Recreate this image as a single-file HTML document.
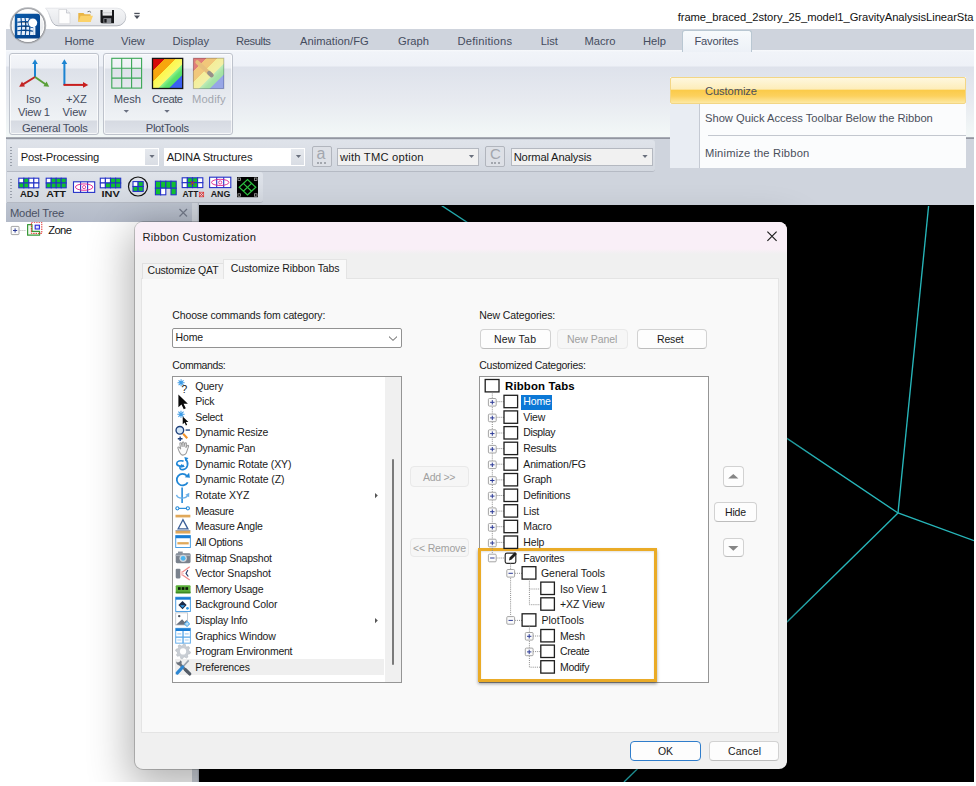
<!DOCTYPE html>
<html><head><meta charset="utf-8"><title>Ribbon Customization</title>
<style>
*{margin:0;padding:0;box-sizing:border-box}
html,body{width:976px;height:786px;overflow:hidden;background:#fff}
body{position:relative;font-family:"Liberation Sans",sans-serif}
.a{position:absolute}
.t{position:absolute;white-space:nowrap;line-height:16px;height:16px}
.btn{position:absolute;background:#fdfdfd;border:1px solid #d2d2d2;border-bottom-color:#bdbdbd;border-radius:4px}
.btn.dis{background:#f6f6f6;border-color:#e9e9e9}
.cb{position:absolute;width:13.5px;height:13.5px;border:1.3px solid #222;background:#fff}
.grp{position:absolute;border:1px solid #bec3cc;border-radius:3px;box-shadow:inset 0 0 0 1px rgba(255,255,255,.7);background:linear-gradient(#f4f6fa 0,#eef0f5 14px,#dde1e9 15px,#eff2f5 66px,#d6dae2 67px,#dfe3ea 100%)}
.combo{position:absolute;background:#fff;height:18px}
.cbtn{position:absolute;width:13.2px;height:16px;background:linear-gradient(#e6e9ee,#d9dde4)}
</style></head><body>
<div class="a" style="left:0;top:0;width:974px;height:782px;overflow:hidden">

<!-- ===== application frame ===== -->
<div class="a" style="left:6px;top:29px;width:968px;height:22px;background:#cfd4dd"></div>
<div class="a" style="left:6px;top:50px;width:968px;height:88px;background:linear-gradient(#f8fafc 0,#f1f4f9 2px,#eef1f7 16px,#dee2eb 17px,#e7eaf0 50px,#f2f7f7 84px,#f2f7f7 100%)"></div>
<div class="a" style="left:6px;top:137.2px;width:968px;height:2.1px;background:linear-gradient(#b3b7bf,#878c96)"></div>
<div class="a" style="left:6px;top:139px;width:968px;height:66px;background:#cfd4dd"></div>
<!-- active ribbon tab -->
<div class="a" style="left:682px;top:30px;width:70px;height:22px;border:1px solid #b9c7d2;border-bottom:none;border-radius:3px 3px 0 0;background:linear-gradient(#f7fafc,#edf1f7)"></div>
<!-- ribbon groups -->
<div class="grp" style="left:9.3px;top:53px;width:89.6px;height:82.3px"></div>
<div class="grp" style="left:102.6px;top:53px;width:130px;height:82.3px"></div>
<!-- toolbar bands -->
<div class="a" style="left:7px;top:139.5px;width:648px;height:32px;background:linear-gradient(#dfe3ea,#d3d8e0);border-bottom:1px solid #b5bac4;border-radius:0 3px 3px 0"></div>
<div class="a" style="left:7px;top:172px;width:256px;height:30.6px;background:linear-gradient(#dfe3ea,#d3d8e0);border-bottom:1px solid #b5bac4;border-radius:0 3px 3px 0"></div>
<div class="a" style="left:10px;top:147px;width:2px;height:19px;background:repeating-linear-gradient(#9aa0ab 0 1px,transparent 1px 3px)"></div>
<div class="a" style="left:10px;top:179px;width:2px;height:19px;background:repeating-linear-gradient(#9aa0ab 0 1px,transparent 1px 3px)"></div>
<!-- combos -->
<div class="combo" style="left:17.5px;top:147.5px;width:141.3px"></div><div class="cbtn" style="left:144.8px;top:148.5px"></div>
<div class="combo" style="left:163.7px;top:147.5px;width:141.5px"></div><div class="cbtn" style="left:291.2px;top:148.5px"></div>
<div class="a" style="left:311.5px;top:145.5px;width:20.5px;height:21px;border:1px solid #b1b5bd;border-radius:2px;background:#dde0e6"></div>
<div class="combo" style="left:337px;top:147.5px;width:142px;background:#f1f1f1;border:1px solid #b4b8c0"></div>
<div class="a" style="left:484.5px;top:145.5px;width:20.5px;height:21px;border:1px solid #b1b5bd;border-radius:2px;background:#dde0e6"></div>
<div class="combo" style="left:510.5px;top:147.5px;width:142px;background:#f1f1f1;border:1px solid #b4b8c0"></div>
<!-- model tree -->
<div class="a" style="left:6px;top:203.4px;width:186.4px;height:18.6px;background:linear-gradient(#bcc3cf,#b3bac8)"></div>
<div class="a" style="left:6px;top:222px;width:187px;height:560px;background:#fff"></div>
<div class="a" style="left:192.4px;top:203.4px;width:6.2px;height:578.6px;background:linear-gradient(90deg,#cfd4dc 0,#cfd4dc 75%,#a4aab6 100%)"></div>
<!-- viewport -->
<div class="a" style="left:198.6px;top:204.8px;width:775.4px;height:577.2px;background:#000"></div>
<svg class="a" style="left:198px;top:206px" width="776" height="576" viewBox="198 206 776 576">
 <g stroke="#27b6ba" stroke-width="1.35" fill="none">
  <path d="M440 204.5 L520 257"/>
  <path d="M928.7 205 L898 513"/>
  <path d="M700 380 L898 513 L974 540.6"/>
  <path d="M898 513 L624 782"/>
 </g>
</svg>
<!-- popup menu -->
<div class="a" style="left:670.4px;top:77px;width:295.4px;height:90.8px;background:#fbfcfd"></div>
<div class="a" style="left:670.4px;top:104px;width:29.6px;height:63.8px;background:#e9edf3;border-right:1px solid #c5cad3"></div>
<div class="a" style="left:708px;top:135px;width:258px;height:1px;background:#c3c7cf"></div>
<div class="a" style="left:670.4px;top:77px;width:295.4px;height:26.8px;border:1px solid #f3d685;border-radius:2px;background:linear-gradient(#fef7de 0,#fdedba 44%,#fbcb4a 50%,#fcd15e 72%,#fde9a4 100%)"></div>
<!-- ===== dialog ===== -->
<div class="a" style="left:135px;top:222.3px;width:651.6px;height:546.6px;border-radius:8px;background:#f0f0f0;box-shadow:0 0 0 1px rgba(0,0,0,.2),0 12px 42px 6px rgba(0,0,0,.30)"></div>
<div class="a" style="left:135px;top:222.3px;width:651.6px;height:31.7px;border-radius:8px 8px 0 0;background:linear-gradient(#f9eff7 0,#f9eff7 84%,#f0f0f0 100%)"></div>
<div class="a" style="left:140.6px;top:278.4px;width:638.4px;height:454.8px;background:#f9f9f9;border:1px solid #e4e4e4"></div>
<div class="a" style="left:142px;top:262.5px;width:81.5px;height:16px;background:#f3f3f3;border:1px solid #e0e0e0;border-bottom:none"></div>
<div class="a" style="left:223px;top:259px;width:123.5px;height:20.4px;background:#f9f9f9;border:1px solid #e4e4e4;border-bottom:none"></div>
<!-- left column -->
<div class="a" style="left:172.3px;top:328px;width:229.7px;height:20px;background:#fff;border:1px solid #929292;border-radius:2px"></div>
<div class="a" style="left:172.3px;top:376.1px;width:229.7px;height:306.9px;background:#fff;border:1px solid #959595"></div>
<div class="a" style="left:384.6px;top:377.1px;width:16.4px;height:304.9px;background:#f0f0f0"></div>
<div class="a" style="left:392px;top:459px;width:1.6px;height:206px;background:#7a7a7a;border-radius:1px"></div>
<div class="a" style="left:174.6px;top:659px;width:209px;height:15.6px;background:#efefef"></div>
<!-- right column -->
<div class="btn" style="left:480.3px;top:329px;width:70.3px;height:19.7px"></div>
<div class="btn dis" style="left:557.4px;top:329px;width:70.6px;height:19.7px"></div>
<div class="btn" style="left:636.5px;top:329px;width:70.3px;height:19.7px"></div>
<div class="a" style="left:479.3px;top:376.1px;width:229.7px;height:306.9px;background:#fff;border:1px solid #959595"></div>
<div class="btn dis" style="left:410px;top:466.4px;width:58.7px;height:20.3px"></div>
<div class="btn dis" style="left:410px;top:537.5px;width:58.7px;height:19.8px"></div>
<div class="btn" style="left:723px;top:466.4px;width:20.7px;height:20.2px"></div>
<div class="btn" style="left:714.3px;top:501.6px;width:43.2px;height:20.2px"></div>
<div class="btn" style="left:723px;top:537.6px;width:20.7px;height:19.6px"></div>
<div class="btn" style="left:630px;top:741.3px;width:71px;height:19.8px;border:1.3px solid #2f7dcb"></div>
<div class="btn" style="left:709.2px;top:741.3px;width:70.2px;height:19.8px"></div>
<!-- selected item -->
<div class="a" style="left:521px;top:394.5px;width:31px;height:15px;background:#0b78d6"></div>
<!-- orange highlight -->
<div class="a" style="left:477.6px;top:548px;width:179px;height:134.4px;border:3px solid #eaab27;box-shadow:0 2px 3px rgba(0,0,0,.35), inset 0 1px 2px rgba(0,0,0,.12)"></div>

<svg class="a" style="left:0;top:0" width="976" height="224" viewBox="0 0 976 224">
<defs>
 <linearGradient id="orbg" x1="0" y1="0" x2="0" y2="1"><stop offset="0" stop-color="#ffffff"/><stop offset=".55" stop-color="#e9ebee"/><stop offset="1" stop-color="#ffffff"/></linearGradient>
 <linearGradient id="blu" x1="0" y1="0" x2="1" y2="1"><stop offset="0" stop-color="#0a5cab"/><stop offset="1" stop-color="#033d86"/></linearGradient>
 <linearGradient id="qats" x1="0" y1="0" x2="0" y2="1"><stop offset="0" stop-color="#e4e6ea"/><stop offset="1" stop-color="#aeb2ba"/></linearGradient>
 <linearGradient id="qatg" x1="0" y1="0" x2="0" y2="1"><stop offset="0" stop-color="#f4f5f7"/><stop offset="1" stop-color="#e4e6ea"/></linearGradient>
 <linearGradient id="rain" x1="0" y1="0" x2="1" y2="1">
  <stop offset="0" stop-color="#d60a0a"/><stop offset=".21" stop-color="#d60a0a"/>
  <stop offset=".21" stop-color="#f7a60e"/><stop offset=".39" stop-color="#f7a60e"/>
  <stop offset=".39" stop-color="#fdf74e"/><stop offset=".58" stop-color="#fafa6a"/>
  <stop offset=".6" stop-color="#8cf08a"/><stop offset=".68" stop-color="#5ce26c"/>
  <stop offset=".76" stop-color="#52dc66"/>
  <stop offset=".78" stop-color="#3a60f0"/><stop offset="1" stop-color="#3a60f0"/>
 </linearGradient>
</defs>
<!-- QAT pill -->
<path d="M45.5 8.2 H117 A8.8 8.8 0 0 1 117 25.8 H58 C50 25.8 50.5 12 45.5 8.2 Z" fill="url(#qatg)" stroke="url(#qats)" stroke-width="1"/>
<!-- new doc -->
<path d="M58.8 9.5 H66.5 L70 13 V23.8 H58.8 Z" fill="#fdfdfd" stroke="#d5d7db" stroke-width=".8"/>
<path d="M66.5 9.5 V13 H70" fill="#eef0f3" stroke="#b9bcc3" stroke-width=".7"/>
<!-- folder -->
<path d="M78.3 13 H83.5 L84.6 14.2 H90.6 V21.8 H78.3 Z" fill="#e9b544"/>
<path d="M80.6 15.7 H93 L90.6 21.9 H78.3 Z" fill="#fbd26a"/>
<path d="M87.5 11.8 q2.2 -1.4 3.6 .7" stroke="#555" stroke-width=".8" fill="none"/>
<!-- floppy -->
<path d="M100.5 10 H114 V23.3 H101.6 L100.5 22.2 Z" fill="#17181b"/>
<rect x="102.6" y="10" width="9.4" height="5.6" fill="#e9eaec"/>
<rect x="102.6" y="12.3" width="9.4" height="1" fill="#c9cacd"/>
<rect x="103.4" y="18.2" width="7.8" height="5.1" fill="#8d9096"/>
<rect x="104.3" y="19" width="2.3" height="3.6" fill="#17181b"/>
<!-- qat dropdown -->
<rect x="134.3" y="12.8" width="5.4" height="1.3" fill="#4a4f5a"/>
<path d="M134 15.6 H140 L137 19 Z" fill="#4a4f5a"/>
<!-- orb -->
<circle cx="28" cy="25.6" r="17.5" fill="none" stroke="#b4b6ba" stroke-width="1.5"/><circle cx="28" cy="25.6" r="16.6" fill="url(#orbg)" stroke="#85878d" stroke-width="1.1"/>
<circle cx="28" cy="25.6" r="15.9" fill="none" stroke="#ffffff" stroke-width="1.2" opacity=".9"/>
<rect x="14.8" y="13.8" width="25.2" height="24.8" rx="2.2" fill="url(#blu)"/>
<g stroke="#0a4f9d" stroke-width="1.1">
 <rect x="17.3" y="18" width="16" height="17" fill="#e8f0fb" stroke="none"/>
 <path d="M21 18 q1.5 8 0 17 M25 18 q1.8 8 .3 17 M29.2 18 q1.5 8 .3 17"/>
 <path d="M17.3 22.3 q8 -1.6 16 .2 M17.3 26.6 q8 -1.6 16 .4 M17.3 30.8 q8 -1.6 16 .4"/>
</g>
<circle cx="32.8" cy="22.8" r="5.2" fill="#0a4f9d"/>
<circle cx="32.8" cy="22.8" r="4.4" fill="#ffffff"/>
<rect x="33.2" y="27" width="2.2" height="8" fill="#e8f0fb"/>

<!-- Iso View icon -->
<g stroke-width="2" fill="none" stroke-linecap="butt">
 <path d="M35 77 V62" stroke="#1b83d1"/><path d="M35 59.2 L32.2 64 H37.8 Z" fill="#1b83d1" stroke="none"/>
 <path d="M35 77 L23 84.3" stroke="#c32525"/><path d="M19.2 86.8 L22 81.6 L25 86.4 Z" fill="#c32525" stroke="none"/>
 <path d="M35 77 L45.5 84.3" stroke="#5a9f38"/><path d="M49.2 86.8 L43.4 86.3 L46.6 81.6 Z" fill="#5a9f38" stroke="none"/>
</g>
<!-- +XZ icon -->
<path d="M64.4 85 V62" stroke="#1b83d1" stroke-width="2"/><path d="M64.4 59.2 L61.6 64 H67.2 Z" fill="#1b83d1"/>
<path d="M63.5 84.9 H84" stroke="#c81e1e" stroke-width="2"/><path d="M88.3 84.9 L83 82 V87.8 Z" fill="#c81e1e"/>
<!-- Mesh icon -->
<g stroke="#3aa655" stroke-width="1.1" fill="none">
 <rect x="111.8" y="58.3" width="29.8" height="29.8" fill="none"/>
 <path d="M121.7 58.3 V88.1 M131.6 58.3 V88.1 M111.8 68.2 H141.6 M111.8 78.1 H141.6"/>
</g>
<!-- Create icon -->
<rect x="152.5" y="58.4" width="30.2" height="30.1" fill="url(#rain)" stroke="#141414" stroke-width="1.3"/>
<!-- Modify icon (disabled) -->
<rect x="193.4" y="58.2" width="30.4" height="30.4" fill="url(#rain)"/>
<rect x="193.4" y="58.2" width="30.4" height="30.4" fill="#ece6de" opacity=".52" stroke="#7d7d86" stroke-width="1"/>
<path d="M197.3 62.2 L211.5 75.2" stroke="#e6bf7c" stroke-width="4" stroke-linecap="round"/>
<path d="M209.2 73 L211.6 75.3" stroke="#97908a" stroke-width="4.2" stroke-linecap="round"/>
<!-- split arrows -->
<path d="M123.6 110 H129 L126.3 112.8 Z" fill="#6a7080"/>
<path d="M164.3 110 H169.7 L167 112.8 Z" fill="#6a7080"/>
<!-- combo arrows -->
<path d="M149.4 155 H154.6 L152 158 Z" fill="#6a707d"/>
<path d="M295.9 155 H301.1 L298.5 158 Z" fill="#6a707d"/>
<path d="M468.9 155 H474.1 L471.5 158 Z" fill="#6a707d"/>
<path d="M642.4 155 H647.6 L645 158 Z" fill="#6a707d"/>
<!-- model tree close -->
<path d="M179.5 209 L187 216.5 M187 209 L179.5 216.5" stroke="#6b7180" stroke-width="1.2"/>
</svg>
<svg class="a" style="left:0;top:172px" width="270" height="32" viewBox="0 172 270 32"><rect x="18.8" y="178.2" width="5.0" height="4.8" fill="#ffffff" stroke="#2432c8" stroke-width="1.1"/><rect x="23.8" y="178.2" width="5.0" height="4.8" fill="#10c030" stroke="#2432c8" stroke-width="1.1"/><rect x="28.8" y="178.2" width="5.0" height="4.8" fill="#ffffff" stroke="#2432c8" stroke-width="1.1"/><rect x="33.8" y="178.2" width="5.0" height="4.8" fill="#ffffff" stroke="#2432c8" stroke-width="1.1"/><rect x="18.8" y="183.0" width="5.0" height="4.8" fill="#10c030" stroke="#2432c8" stroke-width="1.1"/><rect x="23.8" y="183.0" width="5.0" height="4.8" fill="#10c030" stroke="#2432c8" stroke-width="1.1"/><rect x="28.8" y="183.0" width="5.0" height="4.8" fill="#ffffff" stroke="#2432c8" stroke-width="1.1"/><rect x="33.8" y="183.0" width="5.0" height="4.8" fill="#ffffff" stroke="#2432c8" stroke-width="1.1"/><text x="20" y="197" font-family="Liberation Sans, sans-serif" font-weight="bold" font-size="8.6" textLength="19" lengthAdjust="spacingAndGlyphs" fill="#1a1a1a">ADJ</text><rect x="46.2" y="178.2" width="5.0" height="4.8" fill="#ffffff" stroke="#2432c8" stroke-width="1.1"/><rect x="51.2" y="178.2" width="5.0" height="4.8" fill="#10c030" stroke="#2432c8" stroke-width="1.1"/><rect x="56.2" y="178.2" width="5.0" height="4.8" fill="#10c030" stroke="#2432c8" stroke-width="1.1"/><rect x="61.2" y="178.2" width="5.0" height="4.8" fill="#10c030" stroke="#2432c8" stroke-width="1.1"/><rect x="46.2" y="183.0" width="5.0" height="4.8" fill="#10c030" stroke="#2432c8" stroke-width="1.1"/><rect x="51.2" y="183.0" width="5.0" height="4.8" fill="#10c030" stroke="#2432c8" stroke-width="1.1"/><rect x="56.2" y="183.0" width="5.0" height="4.8" fill="#10c030" stroke="#2432c8" stroke-width="1.1"/><rect x="61.2" y="183.0" width="5.0" height="4.8" fill="#10c030" stroke="#2432c8" stroke-width="1.1"/><text x="46.3" y="197" font-family="Liberation Sans, sans-serif" font-weight="bold" font-size="8.6" textLength="19.8" lengthAdjust="spacingAndGlyphs" fill="#1a1a1a">ATT</text><rect x="73.5" y="181.8" width="21.2" height="10.6" fill="#fff" stroke="#2432c8" stroke-width="1.1"/><path d="M80.6 181.8 V192.4 M87.6 181.8 V192.4" stroke="#2432c8" stroke-width="1.1"/><ellipse cx="84.1" cy="187.10000000000002" rx="8.7" ry="3.2" fill="none" stroke="#e0208c" stroke-width=".9"/><circle cx="84.1" cy="187.10000000000002" r="1.6" fill="none" stroke="#e0208c" stroke-width=".8"/><rect x="100.3" y="178.2" width="5.1" height="4.8" fill="#ffffff" stroke="#2432c8" stroke-width="1.1"/><rect x="105.4" y="178.2" width="5.1" height="4.8" fill="#ffffff" stroke="#2432c8" stroke-width="1.1"/><rect x="110.5" y="178.2" width="5.1" height="4.8" fill="#10c030" stroke="#2432c8" stroke-width="1.1"/><rect x="115.6" y="178.2" width="5.1" height="4.8" fill="#10c030" stroke="#2432c8" stroke-width="1.1"/><rect x="100.3" y="183.0" width="5.1" height="4.8" fill="#ffffff" stroke="#2432c8" stroke-width="1.1"/><rect x="105.4" y="183.0" width="5.1" height="4.8" fill="#10c030" stroke="#2432c8" stroke-width="1.1"/><rect x="110.5" y="183.0" width="5.1" height="4.8" fill="#10c030" stroke="#2432c8" stroke-width="1.1"/><rect x="115.6" y="183.0" width="5.1" height="4.8" fill="#10c030" stroke="#2432c8" stroke-width="1.1"/><text x="101.5" y="197" font-family="Liberation Sans, sans-serif" font-weight="bold" font-size="8.6" textLength="18.3" lengthAdjust="spacingAndGlyphs" fill="#1a1a1a">INV</text><circle cx="138" cy="186.5" r="9.5" fill="none" stroke="#151515" stroke-width="1.2"/><rect x="133.0" y="181.6" width="5.1" height="4.9" fill="#ffffff" stroke="#2432c8" stroke-width="1.1"/><rect x="138.1" y="181.6" width="5.1" height="4.9" fill="#10c030" stroke="#2432c8" stroke-width="1.1"/><rect x="133.0" y="186.5" width="5.1" height="4.9" fill="#10c030" stroke="#2432c8" stroke-width="1.1"/><rect x="138.1" y="186.5" width="5.1" height="4.9" fill="#10c030" stroke="#2432c8" stroke-width="1.1"/><rect x="155.4" y="181.2" width="5.2" height="7.0" fill="#10c030" stroke="#2432c8" stroke-width="1.1"/><rect x="160.6" y="181.2" width="5.2" height="7.0" fill="#10c030" stroke="#2432c8" stroke-width="1.1"/><rect x="165.8" y="181.2" width="5.2" height="7.0" fill="#10c030" stroke="#2432c8" stroke-width="1.1"/><rect x="171.0" y="181.2" width="5.2" height="7.0" fill="#10c030" stroke="#2432c8" stroke-width="1.1"/><rect x="155.4" y="188.2" width="5.2" height="6.6" fill="#10c030" stroke="#2432c8" stroke-width="1.1"/><rect x="160.6" y="188.2" width="5.2" height="6.6" fill="#ffffff" stroke="#2432c8" stroke-width="1.1"/><rect x="171.0" y="188.2" width="5.2" height="6.6" fill="#10c030" stroke="#2432c8" stroke-width="1.1"/><rect x="182.2" y="177.8" width="5.2" height="4.9" fill="#ffffff" stroke="#2432c8" stroke-width="1.1"/><rect x="187.3" y="177.8" width="5.2" height="4.9" fill="#10c030" stroke="#2432c8" stroke-width="1.1"/><rect x="192.5" y="177.8" width="5.2" height="4.9" fill="#10c030" stroke="#2432c8" stroke-width="1.1"/><rect x="197.6" y="177.8" width="5.2" height="4.9" fill="#ffffff" stroke="#2432c8" stroke-width="1.1"/><rect x="182.2" y="182.7" width="5.2" height="4.9" fill="#ffffff" stroke="#2432c8" stroke-width="1.1"/><rect x="187.3" y="182.7" width="5.2" height="4.9" fill="#10c030" stroke="#2432c8" stroke-width="1.1"/><rect x="192.5" y="182.7" width="5.2" height="4.9" fill="#10c030" stroke="#2432c8" stroke-width="1.1"/><rect x="197.6" y="182.7" width="5.2" height="4.9" fill="#ffffff" stroke="#2432c8" stroke-width="1.1"/><path d="M190.5 181 l4 4 m0 -4 l-4 4" stroke="#e02020" stroke-width="1"/><text x="182.6" y="197" font-family="Liberation Sans, sans-serif" font-weight="bold" font-size="8.6" textLength="15.8" lengthAdjust="spacingAndGlyphs" fill="#1a1a1a">ATT</text><rect x="199.3" y="192.2" width="4.4" height="4.6" fill="none" stroke="#e02020" stroke-width=".7"/><path d="M199.6 192.5 l3.8 4 m0 -4 l-3.8 4" stroke="#e02020" stroke-width=".8"/><rect x="209.6" y="177.2" width="21.2" height="10.4" fill="#fff" stroke="#2432c8" stroke-width="1.1"/><path d="M216.7 177.2 V187.6 M223.7 177.2 V187.6" stroke="#2432c8" stroke-width="1.1"/><ellipse cx="220.2" cy="182.39999999999998" rx="8.7" ry="3.1" fill="none" stroke="#e0208c" stroke-width=".9"/><circle cx="220.2" cy="182.39999999999998" r="1.6" fill="none" stroke="#e0208c" stroke-width=".8"/><text x="210.7" y="197" font-family="Liberation Sans, sans-serif" font-weight="bold" font-size="8.6" textLength="19.6" lengthAdjust="spacingAndGlyphs" fill="#1a1a1a">ANG</text><rect x="237" y="177" width="21" height="20.2" fill="#000"/><g stroke="#2cc040" stroke-width="1.2" fill="none"><path d="M247.5 179.5 L255.8 187.3 L247.5 195 L239.2 187.3 Z M243.3 183.4 L251.6 191.2 M251.6 183.4 L243.3 191.2"/></g><g fill="none" stroke="#b8b8b8" stroke-width=".7"><rect x="238" y="178" width="2.4" height="2.4"/><rect x="254.6" y="178" width="2.4" height="2.4"/><rect x="238" y="193.8" width="2.4" height="2.4"/><rect x="254.6" y="193.8" width="2.4" height="2.4"/></g></svg><span class="t" style="left:316.6px;top:146px;font-size:16px;color:#a3a7ae;line-height:16px">a</span><span class="t" style="left:490px;top:146px;font-size:15px;color:#a3a7ae;line-height:16px">C</span><div class="a" style="left:317px;top:162.2px;width:9px;height:1.5px;background:repeating-linear-gradient(90deg,#a3a7ae 0 2px,transparent 2px 3.5px)"></div><div class="a" style="left:490.5px;top:162.2px;width:9px;height:1.5px;background:repeating-linear-gradient(90deg,#a3a7ae 0 2px,transparent 2px 3.5px)"></div><svg class="a" style="left:476px;top:374px" width="240" height="312" viewBox="476 374 240 312"><rect x="485.2" y="379.5" width="13.8" height="12.4" fill="#fff" stroke="#1e1e1e" stroke-width="1.3"/><path d="M492.3 392.5 V554.0" stroke="#8a8a8a" stroke-width="1" stroke-dasharray="1 1.1" fill="none"/><path d="M496.5 401.7 H504" stroke="#8a8a8a" stroke-width="1" stroke-dasharray="1 1.1" fill="none"/><rect x="488.4" y="398.5" width="7.8" height="7.6" rx="1" fill="#fbfbfb" stroke="#9b9b9b" stroke-width=".9"/><path d="M490.1 402.3 H494.5" stroke="#2c3a96" stroke-width="1"/><path d="M492.3 400.1 V404.5" stroke="#2c3a96" stroke-width="1"/><rect x="504.0" y="395.3" width="13.6" height="12.4" fill="#fff" stroke="#1e1e1e" stroke-width="1.3"/><path d="M496.5 417.3 H504" stroke="#8a8a8a" stroke-width="1" stroke-dasharray="1 1.1" fill="none"/><rect x="488.4" y="414.1" width="7.8" height="7.6" rx="1" fill="#fbfbfb" stroke="#9b9b9b" stroke-width=".9"/><path d="M490.1 417.9 H494.5" stroke="#2c3a96" stroke-width="1"/><path d="M492.3 415.7 V420.1" stroke="#2c3a96" stroke-width="1"/><rect x="504.0" y="410.9" width="13.6" height="12.4" fill="#fff" stroke="#1e1e1e" stroke-width="1.3"/><path d="M496.5 433.0 H504" stroke="#8a8a8a" stroke-width="1" stroke-dasharray="1 1.1" fill="none"/><rect x="488.4" y="429.8" width="7.8" height="7.6" rx="1" fill="#fbfbfb" stroke="#9b9b9b" stroke-width=".9"/><path d="M490.1 433.6 H494.5" stroke="#2c3a96" stroke-width="1"/><path d="M492.3 431.4 V435.8" stroke="#2c3a96" stroke-width="1"/><rect x="504.0" y="426.6" width="13.6" height="12.4" fill="#fff" stroke="#1e1e1e" stroke-width="1.3"/><path d="M496.5 448.6 H504" stroke="#8a8a8a" stroke-width="1" stroke-dasharray="1 1.1" fill="none"/><rect x="488.4" y="445.4" width="7.8" height="7.6" rx="1" fill="#fbfbfb" stroke="#9b9b9b" stroke-width=".9"/><path d="M490.1 449.2 H494.5" stroke="#2c3a96" stroke-width="1"/><path d="M492.3 447.0 V451.4" stroke="#2c3a96" stroke-width="1"/><rect x="504.0" y="442.2" width="13.6" height="12.4" fill="#fff" stroke="#1e1e1e" stroke-width="1.3"/><path d="M496.5 464.2 H504" stroke="#8a8a8a" stroke-width="1" stroke-dasharray="1 1.1" fill="none"/><rect x="488.4" y="461.0" width="7.8" height="7.6" rx="1" fill="#fbfbfb" stroke="#9b9b9b" stroke-width=".9"/><path d="M490.1 464.8 H494.5" stroke="#2c3a96" stroke-width="1"/><path d="M492.3 462.6 V467.0" stroke="#2c3a96" stroke-width="1"/><rect x="504.0" y="457.8" width="13.6" height="12.4" fill="#fff" stroke="#1e1e1e" stroke-width="1.3"/><path d="M496.5 479.9 H504" stroke="#8a8a8a" stroke-width="1" stroke-dasharray="1 1.1" fill="none"/><rect x="488.4" y="476.7" width="7.8" height="7.6" rx="1" fill="#fbfbfb" stroke="#9b9b9b" stroke-width=".9"/><path d="M490.1 480.5 H494.5" stroke="#2c3a96" stroke-width="1"/><path d="M492.3 478.3 V482.7" stroke="#2c3a96" stroke-width="1"/><rect x="504.0" y="473.5" width="13.6" height="12.4" fill="#fff" stroke="#1e1e1e" stroke-width="1.3"/><path d="M496.5 495.5 H504" stroke="#8a8a8a" stroke-width="1" stroke-dasharray="1 1.1" fill="none"/><rect x="488.4" y="492.3" width="7.8" height="7.6" rx="1" fill="#fbfbfb" stroke="#9b9b9b" stroke-width=".9"/><path d="M490.1 496.1 H494.5" stroke="#2c3a96" stroke-width="1"/><path d="M492.3 493.9 V498.3" stroke="#2c3a96" stroke-width="1"/><rect x="504.0" y="489.1" width="13.6" height="12.4" fill="#fff" stroke="#1e1e1e" stroke-width="1.3"/><path d="M496.5 511.1 H504" stroke="#8a8a8a" stroke-width="1" stroke-dasharray="1 1.1" fill="none"/><rect x="488.4" y="507.9" width="7.8" height="7.6" rx="1" fill="#fbfbfb" stroke="#9b9b9b" stroke-width=".9"/><path d="M490.1 511.7 H494.5" stroke="#2c3a96" stroke-width="1"/><path d="M492.3 509.5 V513.9" stroke="#2c3a96" stroke-width="1"/><rect x="504.0" y="504.7" width="13.6" height="12.4" fill="#fff" stroke="#1e1e1e" stroke-width="1.3"/><path d="M496.5 526.7 H504" stroke="#8a8a8a" stroke-width="1" stroke-dasharray="1 1.1" fill="none"/><rect x="488.4" y="523.5" width="7.8" height="7.6" rx="1" fill="#fbfbfb" stroke="#9b9b9b" stroke-width=".9"/><path d="M490.1 527.3 H494.5" stroke="#2c3a96" stroke-width="1"/><path d="M492.3 525.1 V529.5" stroke="#2c3a96" stroke-width="1"/><rect x="504.0" y="520.3" width="13.6" height="12.4" fill="#fff" stroke="#1e1e1e" stroke-width="1.3"/><path d="M496.5 542.4 H504" stroke="#8a8a8a" stroke-width="1" stroke-dasharray="1 1.1" fill="none"/><rect x="488.4" y="539.2" width="7.8" height="7.6" rx="1" fill="#fbfbfb" stroke="#9b9b9b" stroke-width=".9"/><path d="M490.1 543.0 H494.5" stroke="#2c3a96" stroke-width="1"/><path d="M492.3 540.8 V545.2" stroke="#2c3a96" stroke-width="1"/><rect x="504.0" y="536.0" width="13.6" height="12.4" fill="#fff" stroke="#1e1e1e" stroke-width="1.3"/><path d="M496.5 558 H504.5" stroke="#8a8a8a" stroke-width="1" stroke-dasharray="1 1.1" fill="none"/><rect x="488.4" y="554.2" width="7.8" height="7.6" rx="1" fill="#fbfbfb" stroke="#9b9b9b" stroke-width=".9"/><path d="M490.1 558.0 H494.5" stroke="#2c3a96" stroke-width="1"/><rect x="505.2" y="553.2" width="10.6" height="10.2" rx="1.8" fill="#fff" stroke="#2a2a2a" stroke-width="1.2"/><path d="M509 560.4 L509.6 557.6 L515 552.0 L517 554.0 L511.6 559.6 Z" fill="#1e1e1e"/><path d="M510.6 563.5 V616.4" stroke="#8a8a8a" stroke-width="1" stroke-dasharray="1 1.1" fill="none"/><path d="M514.8 573.3 H522" stroke="#8a8a8a" stroke-width="1" stroke-dasharray="1 1.1" fill="none"/><rect x="506.8" y="569.5" width="7.8" height="7.6" rx="1" fill="#fbfbfb" stroke="#9b9b9b" stroke-width=".9"/><path d="M508.5 573.3 H512.9" stroke="#2c3a96" stroke-width="1"/><rect x="522.1" y="566.7" width="13.8" height="12.4" fill="#fff" stroke="#1e1e1e" stroke-width="1.3"/><path d="M529.4 579.3 V604.7 H540.5" stroke="#8a8a8a" stroke-width="1" stroke-dasharray="1 1.1" fill="none"/><path d="M529.4 589 H540.5" stroke="#8a8a8a" stroke-width="1" stroke-dasharray="1 1.1" fill="none"/><rect x="540.8" y="582.1" width="13.6" height="12.4" fill="#fff" stroke="#1e1e1e" stroke-width="1.3"/><rect x="540.8" y="597.8" width="13.6" height="12.4" fill="#fff" stroke="#1e1e1e" stroke-width="1.3"/><path d="M514.8 620.4 H522" stroke="#8a8a8a" stroke-width="1" stroke-dasharray="1 1.1" fill="none"/><rect x="506.8" y="616.6" width="7.8" height="7.6" rx="1" fill="#fbfbfb" stroke="#9b9b9b" stroke-width=".9"/><path d="M508.5 620.4 H512.9" stroke="#2c3a96" stroke-width="1"/><rect x="522.1" y="613.8" width="13.8" height="12.4" fill="#fff" stroke="#1e1e1e" stroke-width="1.3"/><path d="M529.4 626.4 V667.2 H540.5" stroke="#8a8a8a" stroke-width="1" stroke-dasharray="1 1.1" fill="none"/><path d="M533 636 H540.5" stroke="#8a8a8a" stroke-width="1" stroke-dasharray="1 1.1" fill="none"/><rect x="525.3" y="632.5" width="7.8" height="7.6" rx="1" fill="#fbfbfb" stroke="#9b9b9b" stroke-width=".9"/><path d="M527.0 636.3 H531.4" stroke="#2c3a96" stroke-width="1"/><path d="M529.2 634.1 V638.5" stroke="#2c3a96" stroke-width="1"/><rect x="540.8" y="629.5" width="13.6" height="12.4" fill="#fff" stroke="#1e1e1e" stroke-width="1.3"/><path d="M533 651.6 H540.5" stroke="#8a8a8a" stroke-width="1" stroke-dasharray="1 1.1" fill="none"/><rect x="525.3" y="648.1" width="7.8" height="7.6" rx="1" fill="#fbfbfb" stroke="#9b9b9b" stroke-width=".9"/><path d="M527.0 651.9 H531.4" stroke="#2c3a96" stroke-width="1"/><path d="M529.2 649.7 V654.1" stroke="#2c3a96" stroke-width="1"/><rect x="540.8" y="645.1" width="13.6" height="12.4" fill="#fff" stroke="#1e1e1e" stroke-width="1.3"/><rect x="540.8" y="660.7" width="13.6" height="12.4" fill="#fff" stroke="#1e1e1e" stroke-width="1.3"/></svg><svg class="a" style="left:174px;top:377px" width="212" height="306" viewBox="174 377 212 306"><g transform="translate(174.9 377.6) scale(1.03)"><path d="M2.6 5.0 L9.4 5.0 M3.6 2.6 L8.4 7.4 M6.0 1.6 L6.0 8.4 M8.4 2.6 L3.6 7.4 " stroke="#3d9be6" stroke-width="1" fill="none"/><text x="6.4" y="15.2" font-family="Liberation Sans, sans-serif" font-size="10" fill="#111">?</text></g><g transform="translate(174.9 393.2) scale(1.03)"><path d="M3.4 1.2 L3.4 13.7 L6.4 11.0 L8.6 15.6 L10.6 14.7 L8.4 10.2 L12.6 10.2 Z" fill="#0a0a0a"/></g><g transform="translate(174.9 408.9) scale(1.03)"><path d="M2.4 5.2 L9.4 5.2 M3.4 2.7 L8.4 7.7 M5.9 1.7 L5.9 8.7 M8.4 2.7 L3.4 7.7 " stroke="#3d9be6" stroke-width="1" fill="none"/><path d="M7.6 7.4 L7.6 14.9 L9.4 13.3 L10.7 16.0 L11.9 15.5 L10.6 12.8 L13.1 12.8 Z" fill="#0a0a0a"/></g><g transform="translate(174.9 424.5) scale(1.03)"><circle cx="4.8" cy="5.6" r="3.7" fill="#d5e8f8" stroke="#1d3f7a" stroke-width="1.3"/><path d="M8 9 L12 13.4" stroke="#f0922a" stroke-width="2"/><path d="M10.4 5.4 H14.6" stroke="#1d3f7a" stroke-width="1.3"/><path d="M2.8 13.8 H7.4 M5.1 11.6 V16" stroke="#1d3f7a" stroke-width="1.3"/></g><g transform="translate(174.9 440.1) scale(1.03)"><path d="M3.2 8.6 C2.2 6.8 3.4 6 4.6 7.4 L5.6 8.8 L4.8 3.4 C4.8 2.2 6.2 2.2 6.4 3.4 L7 6.6 L7.2 2.6 C7.4 1.4 8.8 1.6 8.8 2.8 L8.8 6.6 L9.8 3.2 C10.2 2.2 11.4 2.6 11.2 3.8 L10.6 7.4 L12 5.4 C12.8 4.6 13.6 5.4 13.2 6.4 L11.6 11 C11 13.6 9.4 14.6 7.6 14.6 C5.6 14.6 4.6 13 3.2 8.6 Z" fill="#fbfbfb" stroke="#9a9a9a" stroke-width="1"/></g><g transform="translate(174.9 455.8) scale(1.03)"><path d="M10.6 3.6 C13.8 6.4 12.6 12.6 8 13.4 C5.6 13.8 4.4 12.2 5 10.8" fill="none" stroke="#1f86d6" stroke-width="1.6"/><path d="M9.2 1.2 L13.2 2.2 L10.2 5.4 Z" fill="#1f86d6"/><path d="M8.6 9.2 C5.6 11 1.6 9.6 1.8 7.2 C2 5.2 5.4 4.2 8.4 5.2" fill="none" stroke="#1f86d6" stroke-width="1.6"/><path d="M6 8 L9.8 10.6 L5.6 11.6 Z" fill="#1f86d6"/></g><g transform="translate(174.9 471.4) scale(1.03)"><path d="M12.4 10.6 A5.6 5.6 0 1 1 11.6 4.2" fill="none" stroke="#1f86d6" stroke-width="1.7"/><path d="M9.6 5.8 L14.6 6.2 L13.8 1.4 Z" fill="#1f86d6"/></g><g transform="translate(174.9 487.0) scale(1.03)"><path d="M7 0.5 V15.5" stroke="#1f86d6" stroke-width="1.5"/><path d="M1.6 7.6 C2.4 11.6 10.6 12 12.4 8" fill="none" stroke="#6bb0e8" stroke-width="1.4"/><path d="M10.2 7.6 L14 5.6 L13.8 10 Z" fill="#6bb0e8"/></g><g transform="translate(174.9 502.6) scale(1.03)"><path d="M3.4 5.6 H11.4" stroke="#1f86d6" stroke-width="1.1"/><circle cx="2.4" cy="5.6" r="1.5" fill="#fff" stroke="#1f86d6" stroke-width="1"/><circle cx="12.6" cy="5.6" r="1.5" fill="#fff" stroke="#1f86d6" stroke-width="1"/><rect x="0.6" y="11.8" width="14.4" height="2.6" fill="#e0a85a"/></g><g transform="translate(174.9 518.3) scale(1.03)"><path d="M7.8 1.4 L3.2 10.2 H12.6 Z" fill="none" stroke="#3b5f98" stroke-width="1.3"/><rect x="0.6" y="12" width="14.4" height="2.8" fill="#e0a85a"/><rect x="0.6" y="11.4" width="14.4" height="1" fill="#6a7a98" opacity=".6"/></g><g transform="translate(174.9 533.9) scale(1.03)"><rect x="0.8" y="1.6" width="14.2" height="11.6" fill="#fff" stroke="#3f97e0" stroke-width=".9"/><rect x="0.8" y="1.6" width="14.2" height="2.6" fill="#1a7dd4"/><rect x="2.4" y="8" width="11" height="2.2" fill="#e0a85a"/></g><g transform="translate(174.9 549.5) scale(1.03)"><rect x="0.8" y="3.6" width="14.4" height="9.8" rx="1.4" fill="#7a828d"/><rect x="3" y="2" width="4.6" height="2.4" fill="#8a929d"/><rect x="0.8" y="5" width="14.4" height="1.4" fill="#a9b0ba"/><circle cx="8" cy="8.6" r="3.6" fill="#cfd5dc"/><circle cx="8" cy="8.6" r="2.3" fill="#4bb5f0"/></g><g transform="translate(174.9 565.2) scale(1.03)"><rect x="0.8" y="3.4" width="4.6" height="9.4" rx="1" fill="#7a828d"/><path d="M5.4 8 L14.4 1.6 M5.4 8 L14.4 14.4" stroke="#f08a8a" stroke-width="1.2"/><path d="M5 5 L9 8 L5 11 Z" fill="#f7c9c9"/><path d="M12.6 4.6 L10.8 8 L13 11" fill="none" stroke="#2a3c6a" stroke-width="1.1"/></g><g transform="translate(174.9 580.8) scale(1.03)"><rect x="0.8" y="4.4" width="14.4" height="7.8" rx="1" fill="#5bb03a"/><rect x="0.8" y="10.6" width="14.4" height="1.6" fill="#3d8a24"/><rect x="3" y="6.2" width="2.6" height="2.6" fill="#0d1a0a"/><rect x="6.6" y="6.2" width="2.6" height="2.6" fill="#0d1a0a"/><rect x="10.2" y="6.2" width="2.6" height="2.6" fill="#0d1a0a"/></g><g transform="translate(174.9 596.4) scale(1.03)"><rect x="0.8" y="0.8" width="14.2" height="13.8" fill="#fff" stroke="#3f97e0" stroke-width=".9"/><rect x="0.8" y="0.8" width="14.2" height="2.4" fill="#1a7dd4"/><path d="M7.4 4.4 L11.4 8.4 L7.4 12.4 L3.4 8.4 Z" fill="#1a2a48"/><path d="M5 8.6 L7.4 11 L9.8 8.6 Z" fill="#2f9be8"/><circle cx="12.2" cy="11.6" r="1.3" fill="#2f9be8"/></g><g transform="translate(174.9 612.0) scale(1.03)"><rect x="0.8" y="0.8" width="11.4" height="11.8" fill="#fff" stroke="#b8bec6" stroke-width=".8"/><circle cx="4.2" cy="4" r="1.2" fill="#4a525e"/><path d="M1.2 12.4 L7 7 L9.4 9.6 L11.4 7.6 L12 12.4 Z" fill="#6a727e"/><path d="M11.8 8.6 L14.8 11.6 L11.8 14.6 L8.8 11.6 Z" fill="#2f9be8"/><path d="M11.8 9.4 V13.8 M9.6 11.6 H14" stroke="#fff" stroke-width=".8"/></g><g transform="translate(174.9 627.7) scale(1.03)"><rect x="0.8" y="0.6" width="14.2" height="14.4" fill="#fff" stroke="#5aa8e8" stroke-width=".9"/><rect x="0.8" y="0.6" width="14.2" height="2.6" fill="#1a7dd4"/><path d="M7.9 3.2 V15 M0.8 9.2 H15" stroke="#5aa8e8" stroke-width="1.3"/><path d="M2.4 6 H6.2 M9.6 6 H13.4 M2.4 12 H6.2 M9.6 12 H13.4" stroke="#a8d0f2" stroke-width="1"/></g><g transform="translate(174.9 643.3) scale(1.03)"><path d="M15.1 8.4 L14.7 10.1 L12.9 10.4 L12.2 11.5 L12.6 13.4 L11.2 14.3 L9.6 13.2 L8.3 13.5 L7.4 15.1 L5.7 14.7 L5.4 12.9 L4.3 12.2 L2.4 12.6 L1.5 11.2 L2.6 9.6 L2.3 8.3 L0.7 7.4 L1.1 5.7 L2.9 5.4 L3.6 4.3 L3.2 2.4 L4.6 1.5 L6.2 2.6 L7.5 2.3 L8.4 0.7 L10.1 1.1 L10.4 2.9 L11.5 3.6 L13.4 3.2 L14.3 4.6 L13.2 6.2 L13.5 7.5 Z" fill="#c9ced4" stroke="#b4bac1" stroke-width=".6" stroke-linejoin="round"/><circle cx="7.9" cy="7.9" r="3" fill="#fff"/></g><g transform="translate(174.9 658.9) scale(1.03)"><path d="M3.4 3.6 L12.6 13" stroke="#6a727c" stroke-width="2.6"/><path d="M1.6 2.6 A2.6 2.6 0 1 0 5.4 1.2 L4.2 3.6 L2.6 3.4 Z" fill="#6a727c"/><path d="M10.4 10.6 L14.4 14.6" stroke="#555d68" stroke-width="3.2" stroke-linecap="round"/><path d="M13.4 1.4 L8.2 7.2" stroke="#9aa2ac" stroke-width="1.6"/><path d="M7.6 7.8 L2.2 13.8" stroke="#2c86d2" stroke-width="3" stroke-linecap="round"/></g><path d="M375 493.0 L377.8 495.6 L375 498.2 Z" fill="#555"/><path d="M375 618.0 L377.8 620.6 L375 623.2 Z" fill="#555"/></svg><svg class="a" style="left:135px;top:222px" width="652" height="548" viewBox="135 222 652 548"><path d="M767.4 231.6 L776.6 240.8 M776.6 231.6 L767.4 240.8" stroke="#1c1c1c" stroke-width="1.15" fill="none"/><path d="M389 336.6 L393 340.4 L397 336.6" stroke="#555" stroke-width="1" fill="none"/><path d="M728.2 478.6 H738.4 L733.3 473.9 Z" fill="#858585"/><path d="M728.2 546 H738.4 L733.3 550.8 Z" fill="#858585"/></svg><svg class="a" style="left:6px;top:222px" width="70" height="18" viewBox="6 222 70 18"><rect x="11.2" y="226.4" width="7.8" height="8.2" rx=".8" fill="#fbfbfb" stroke="#9b9b9b" stroke-width=".9"/><path d="M13 230.5 H17.2 M15.1 228.4 V232.6" stroke="#2c3a96" stroke-width="1"/><path d="M19.6 230.5 H26" stroke="#b5b5b5" stroke-width="1" stroke-dasharray="1 1"/><path d="M27.6 224.6 H32 V231.4 H39.6 V235.2 H27.6 Z" fill="#f1f8ee" stroke="#3a9a3a" stroke-width="1.2" stroke-linejoin="round"/><rect x="31.4" y="222.2" width="10.4" height="11.2" fill="none" stroke="#e02828" stroke-width="1" stroke-dasharray="1.4 1"/><rect x="35.2" y="225.2" width="4.2" height="3.8" fill="#e4e8ff" stroke="#2a2ad8" stroke-width="1.1"/></svg><span class="t" style="left:677.7px;top:8.8px;font-size:11.2px;color:#111;letter-spacing:-0.05px;">frame_braced_2story_25_model1_GravityAnalysisLinearSta</span>
<span class="t" style="left:64.5px;top:33.2px;font-size:11.2px;color:#454c5e;letter-spacing:-0.05px;">Home</span>
<span class="t" style="left:121.0px;top:33.2px;font-size:11.2px;color:#454c5e;letter-spacing:-0.05px;">View</span>
<span class="t" style="left:172.5px;top:33.2px;font-size:11.2px;color:#454c5e;letter-spacing:-0.03px;">Display</span>
<span class="t" style="left:236.0px;top:33.2px;font-size:11.2px;color:#454c5e;letter-spacing:-0.39px;">Results</span>
<span class="t" style="left:300.0px;top:33.2px;font-size:11.2px;color:#454c5e;letter-spacing:0.03px;">Animation/FG</span>
<span class="t" style="left:398.0px;top:33.2px;font-size:11.2px;color:#454c5e;letter-spacing:-0.05px;">Graph</span>
<span class="t" style="left:457.5px;top:33.2px;font-size:11.2px;color:#454c5e;letter-spacing:0.23px;">Definitions</span>
<span class="t" style="left:540.7px;top:33.2px;font-size:11.2px;color:#454c5e;letter-spacing:-0.05px;">List</span>
<span class="t" style="left:584.5px;top:33.2px;font-size:11.2px;color:#454c5e;letter-spacing:-0.05px;">Macro</span>
<span class="t" style="left:643.0px;top:33.2px;font-size:11.2px;color:#454c5e;letter-spacing:-0.05px;">Help</span>
<span class="t" style="left:694.5px;top:33.2px;font-size:11.2px;color:#454c5e;letter-spacing:-0.23px;">Favorites</span>
<span class="t" style="left:26.0px;top:91.0px;font-size:11.2px;color:#454c5e;letter-spacing:-0.05px;">Iso</span>
<span class="t" style="left:18.0px;top:103.5px;font-size:11.2px;color:#454c5e;letter-spacing:-0.28px;">View 1</span>
<span class="t" style="left:66.0px;top:91.0px;font-size:11.2px;color:#454c5e;letter-spacing:-0.05px;">+XZ</span>
<span class="t" style="left:62.5px;top:103.5px;font-size:11.2px;color:#454c5e;letter-spacing:-0.05px;">View</span>
<span class="t" style="left:113.7px;top:91.0px;font-size:11.2px;color:#454c5e;letter-spacing:-0.05px;">Mesh</span>
<span class="t" style="left:152.0px;top:91.0px;font-size:11.2px;color:#454c5e;letter-spacing:-0.50px;">Create</span>
<span class="t" style="left:192.0px;top:91.0px;font-size:11.2px;color:#a3a7af;letter-spacing:0.15px;">Modify</span>
<span class="t" style="left:22.0px;top:120.0px;font-size:11.2px;color:#454c5e;letter-spacing:-0.24px;">General Tools</span>
<span class="t" style="left:145.7px;top:120.0px;font-size:11.2px;color:#454c5e;letter-spacing:-0.26px;">PlotTools</span>
<span class="t" style="left:20.7px;top:149.0px;font-size:11.2px;color:#1a1a1a;letter-spacing:-0.21px;">Post-Processing</span>
<span class="t" style="left:166.7px;top:149.0px;font-size:11.2px;color:#1a1a1a;letter-spacing:-0.12px;">ADINA Structures</span>
<span class="t" style="left:340.0px;top:149.0px;font-size:11.2px;color:#1a1a1a;letter-spacing:0.21px;">with TMC option</span>
<span class="t" style="left:513.7px;top:149.0px;font-size:11.2px;color:#1a1a1a;letter-spacing:-0.16px;">Normal Analysis</span>
<span class="t" style="left:705.0px;top:82.8px;font-size:11.2px;color:#4a4f5b;letter-spacing:-0.11px;">Customize</span>
<span class="t" style="left:705.0px;top:110.0px;font-size:11.2px;color:#4a4f5b;letter-spacing:-0.02px;">Show Quick Access Toolbar Below the Ribbon</span>
<span class="t" style="left:705.0px;top:145.2px;font-size:11.2px;color:#4a4f5b;letter-spacing:0.16px;">Minimize the Ribbon</span>
<span class="t" style="left:10.0px;top:205.0px;font-size:11.2px;color:#4a5163;letter-spacing:-0.20px;">Model Tree</span>
<span class="t" style="left:48.2px;top:221.5px;font-size:11.2px;color:#111;letter-spacing:-0.05px;letter-spacing:-0.6px;">Zone</span>
<span class="t" style="left:142.5px;top:228.5px;font-size:11.2px;color:#1a1a1a;letter-spacing:0.21px;">Ribbon Customization</span>
<span class="t" style="left:147.5px;top:262.0px;font-size:10.5px;color:#1a1a1a;letter-spacing:-0.19px;">Customize QAT</span>
<span class="t" style="left:230.7px;top:260.3px;font-size:10.5px;color:#1a1a1a;letter-spacing:-0.09px;">Customize Ribbon Tabs</span>
<span class="t" style="left:172.3px;top:307.0px;font-size:10.5px;color:#1a1a1a;letter-spacing:-0.14px;">Choose commands fom category:</span>
<span class="t" style="left:175.6px;top:329.0px;font-size:10.5px;color:#1a1a1a;letter-spacing:-0.16px;">Home</span>
<span class="t" style="left:172.3px;top:357.0px;font-size:10.5px;color:#1a1a1a;letter-spacing:-0.40px;">Commands:</span>
<span class="t" style="left:479.3px;top:307.0px;font-size:10.5px;color:#1a1a1a;letter-spacing:-0.12px;">New Categories:</span>
<span class="t" style="left:479.3px;top:357.0px;font-size:10.5px;color:#1a1a1a;letter-spacing:-0.26px;">Customized Categories:</span>
<span class="t" style="left:494.0px;top:331.0px;font-size:10.5px;color:#1a1a1a;letter-spacing:0.22px;">New Tab</span>
<span class="t" style="left:567.0px;top:331.0px;font-size:10.5px;color:#a0a0a0;letter-spacing:-0.04px;">New Panel</span>
<span class="t" style="left:657.0px;top:331.0px;font-size:10.5px;color:#1a1a1a;letter-spacing:-0.16px;">Reset</span>
<span class="t" style="left:423.0px;top:468.6px;font-size:10.5px;color:#a0a0a0;letter-spacing:-0.28px;">Add &gt;&gt;</span>
<span class="t" style="left:413.0px;top:539.5px;font-size:10.5px;color:#a0a0a0;letter-spacing:-0.16px;">&lt;&lt; Remove</span>
<span class="t" style="left:725.0px;top:503.6px;font-size:10.5px;color:#1a1a1a;letter-spacing:-0.16px;">Hide</span>
<span class="t" style="left:658.0px;top:743.3px;font-size:10.5px;color:#1a1a1a;letter-spacing:-0.16px;">OK</span>
<span class="t" style="left:728.0px;top:743.3px;font-size:10.5px;color:#1a1a1a;letter-spacing:0.06px;">Cancel</span>
<span class="t" style="left:195.2px;top:377.5px;font-size:10.5px;color:#1a1a1a;letter-spacing:-0.16px;">Query</span>
<span class="t" style="left:195.2px;top:393.2px;font-size:10.5px;color:#1a1a1a;letter-spacing:-0.16px;">Pick</span>
<span class="t" style="left:195.2px;top:408.8px;font-size:10.5px;color:#1a1a1a;letter-spacing:-0.28px;">Select</span>
<span class="t" style="left:195.2px;top:424.4px;font-size:10.5px;color:#1a1a1a;letter-spacing:-0.20px;">Dynamic Resize</span>
<span class="t" style="left:195.2px;top:440.1px;font-size:10.5px;color:#1a1a1a;letter-spacing:-0.22px;">Dynamic Pan</span>
<span class="t" style="left:195.2px;top:455.7px;font-size:10.5px;color:#1a1a1a;letter-spacing:-0.13px;">Dynamic Rotate (XY)</span>
<span class="t" style="left:195.2px;top:471.3px;font-size:10.5px;color:#1a1a1a;letter-spacing:-0.10px;">Dynamic Rotate (Z)</span>
<span class="t" style="left:195.2px;top:486.9px;font-size:10.5px;color:#1a1a1a;letter-spacing:0.00px;">Rotate XYZ</span>
<span class="t" style="left:195.2px;top:502.6px;font-size:10.5px;color:#1a1a1a;letter-spacing:-0.34px;">Measure</span>
<span class="t" style="left:195.2px;top:518.2px;font-size:10.5px;color:#1a1a1a;letter-spacing:-0.19px;">Measure Angle</span>
<span class="t" style="left:195.2px;top:533.8px;font-size:10.5px;color:#1a1a1a;letter-spacing:-0.30px;">All Options</span>
<span class="t" style="left:195.2px;top:549.5px;font-size:10.5px;color:#1a1a1a;letter-spacing:-0.23px;">Bitmap Snapshot</span>
<span class="t" style="left:195.2px;top:565.1px;font-size:10.5px;color:#1a1a1a;letter-spacing:-0.09px;">Vector Snapshot</span>
<span class="t" style="left:195.2px;top:580.7px;font-size:10.5px;color:#1a1a1a;letter-spacing:-0.26px;">Memory Usage</span>
<span class="t" style="left:195.2px;top:596.4px;font-size:10.5px;color:#1a1a1a;letter-spacing:-0.12px;">Background Color</span>
<span class="t" style="left:195.2px;top:612.0px;font-size:10.5px;color:#1a1a1a;letter-spacing:-0.23px;">Display Info</span>
<span class="t" style="left:195.2px;top:627.6px;font-size:10.5px;color:#1a1a1a;letter-spacing:-0.11px;">Graphics Window</span>
<span class="t" style="left:195.2px;top:643.2px;font-size:10.5px;color:#1a1a1a;letter-spacing:-0.27px;">Program Environment</span>
<span class="t" style="left:195.2px;top:658.9px;font-size:10.5px;color:#1a1a1a;letter-spacing:-0.18px;">Preferences</span>
<span class="t" style="left:505.0px;top:378.0px;font-size:11.4px;color:#000;letter-spacing:0.15px;font-weight:bold;">Ribbon Tabs</span>
<span class="t" style="left:523.3px;top:393.1px;font-size:10.5px;color:#fff;letter-spacing:-0.16px;">Home</span>
<span class="t" style="left:523.3px;top:408.8px;font-size:10.5px;color:#1a1a1a;letter-spacing:-0.16px;">View</span>
<span class="t" style="left:523.3px;top:424.4px;font-size:10.5px;color:#1a1a1a;letter-spacing:-0.37px;">Display</span>
<span class="t" style="left:523.3px;top:440.0px;font-size:10.5px;color:#1a1a1a;letter-spacing:-0.30px;">Results</span>
<span class="t" style="left:523.3px;top:455.7px;font-size:10.5px;color:#1a1a1a;letter-spacing:-0.14px;">Animation/FG</span>
<span class="t" style="left:523.3px;top:471.3px;font-size:10.5px;color:#1a1a1a;letter-spacing:-0.16px;">Graph</span>
<span class="t" style="left:523.3px;top:486.9px;font-size:10.5px;color:#1a1a1a;letter-spacing:-0.18px;">Definitions</span>
<span class="t" style="left:523.3px;top:502.5px;font-size:10.5px;color:#1a1a1a;letter-spacing:-0.16px;">List</span>
<span class="t" style="left:523.3px;top:518.2px;font-size:10.5px;color:#1a1a1a;letter-spacing:-0.16px;">Macro</span>
<span class="t" style="left:523.3px;top:533.8px;font-size:10.5px;color:#1a1a1a;letter-spacing:-0.16px;">Help</span>
<span class="t" style="left:523.3px;top:549.5px;font-size:10.5px;color:#1a1a1a;letter-spacing:-0.24px;">Favorites</span>
<span class="t" style="left:541.0px;top:564.8px;font-size:10.5px;color:#1a1a1a;letter-spacing:-0.05px;">General Tools</span>
<span class="t" style="left:560.0px;top:580.7px;font-size:10.5px;color:#1a1a1a;letter-spacing:-0.14px;">Iso View 1</span>
<span class="t" style="left:560.0px;top:596.1px;font-size:10.5px;color:#1a1a1a;letter-spacing:-0.06px;">+XZ View</span>
<span class="t" style="left:541.5px;top:611.9px;font-size:10.5px;color:#1a1a1a;letter-spacing:-0.01px;">PlotTools</span>
<span class="t" style="left:560.0px;top:627.5px;font-size:10.5px;color:#1a1a1a;letter-spacing:-0.16px;">Mesh</span>
<span class="t" style="left:560.0px;top:643.0px;font-size:10.5px;color:#1a1a1a;letter-spacing:-0.40px;">Create</span>
<span class="t" style="left:560.0px;top:658.8px;font-size:10.5px;color:#1a1a1a;letter-spacing:-0.29px;">Modify</span>
</div>
</body></html>
